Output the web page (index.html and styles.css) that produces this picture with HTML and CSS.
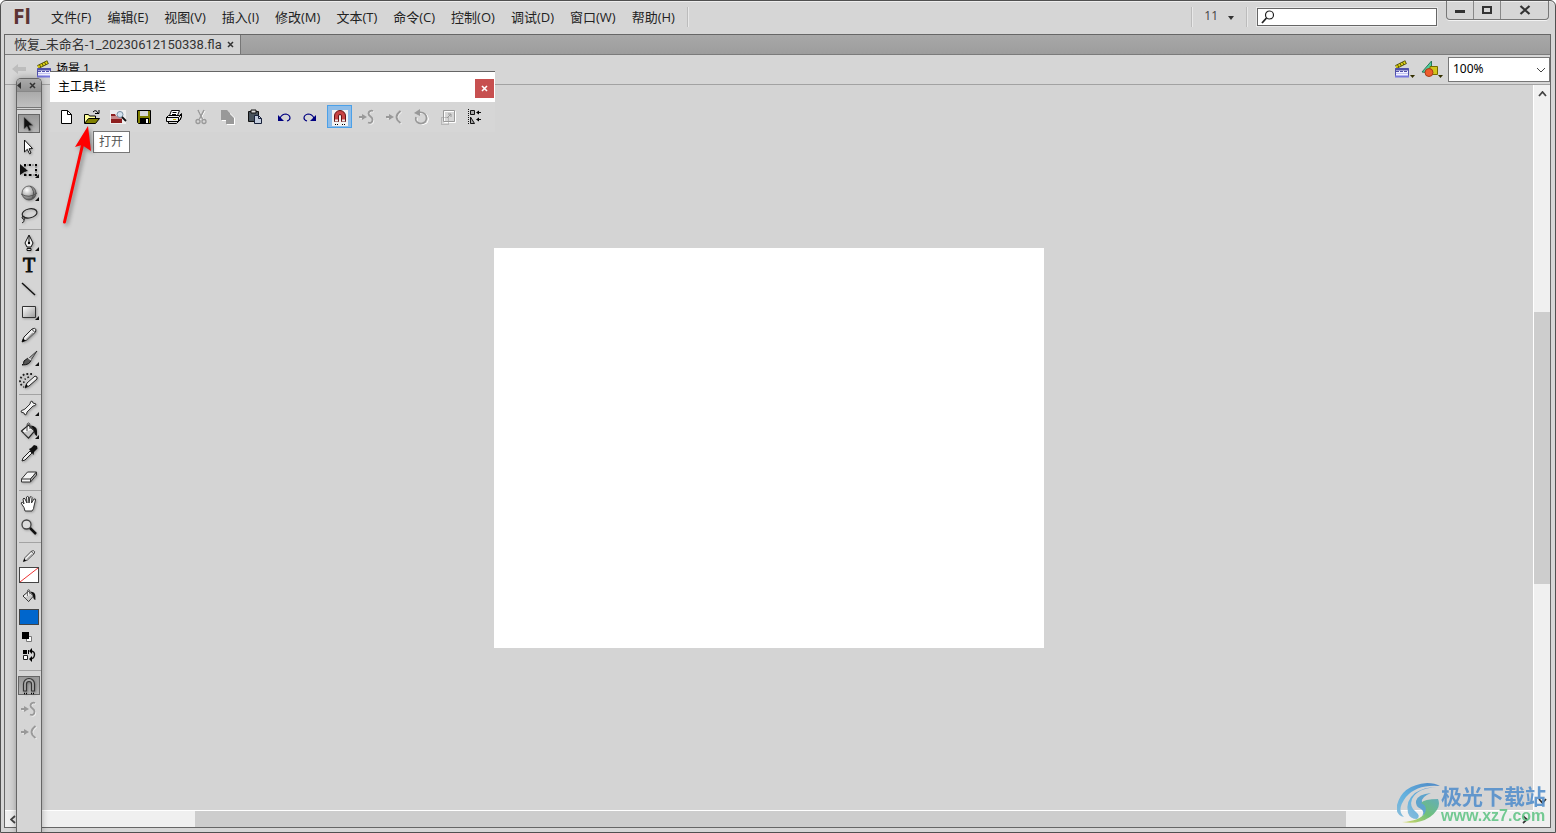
FILE: index.html
```html
<!DOCTYPE html>
<html lang="zh-CN">
<head>
<meta charset="utf-8">
<title>恢复_未命名-1_20230612150338.fla</title>
<link rel="stylesheet" href="styles.css">
</head>
<body>
<svg class="defs" aria-hidden="true">
  <defs>
    <linearGradient id="metal" x1="0" y1="0" x2="1" y2="1"><stop offset="0" stop-color="#fff"/><stop offset="1" stop-color="#999"/></linearGradient>
    <radialGradient id="ball" cx=".35" cy=".3" r=".8"><stop offset="0" stop-color="#fff"/><stop offset=".45" stop-color="#bbb"/><stop offset="1" stop-color="#444"/></radialGradient>
    <linearGradient id="swirlBlue" x1="1" y1="0" x2="0" y2="1"><stop offset="0" stop-color="#3f7fc4"/><stop offset=".6" stop-color="#58aee0"/><stop offset="1" stop-color="#7fb8d8"/></linearGradient>
    <linearGradient id="swirlGreen" x1="1" y1="0" x2="0" y2="1"><stop offset="0" stop-color="#58aab8"/><stop offset=".5" stop-color="#63bd6c"/><stop offset="1" stop-color="#d6d65c"/></linearGradient>
    <symbol id="clapper" viewBox="0 0 17 18">
      <path d="M2 7 12 2" stroke="#4d4900" stroke-width="4"/><path d="M2 7 12 2" stroke="#dbcf16" stroke-width="2.4" stroke-dasharray="2 .8"/>
      <path d="M1.500 8.500h13v8h-13z" fill="#f1f1ff" stroke="#5050a8"/><path d="M1 9.500h14" stroke="#5050a8" stroke-width="2"/><path d="M2 11.500h12" stroke="#5050a8" stroke-dasharray="3 1"/><path d="M2 13.500h12" stroke="#c4c4f4"/><path d="M1 16.500h14" stroke="#7676dd" stroke-width="2"/>
    </symbol>
    <symbol id="magnet" viewBox="0 0 18 18">
      <path d="M3.500 14V7a5.500 5.500 0 0 1 11 0v7h-3V7a2.500 2.500 0 0 0-5 0v7z" fill="#aaa" stroke="currentColor" stroke-width="1.200"/>
      <path d="M4 16.500h4M11 16.500h4" stroke="#000" stroke-width="1.400" stroke-dasharray="1 1"/>
    </symbol>
    <symbol id="smooth" viewBox="0 0 18 18">
      <path d="M2 10h5M15.500 4c-2-1-4 0-4 2.500 0 3 4 3 4 6s-2 4-4 3" fill="none" stroke="#eee" stroke-width="1.500"/>
      <path d="M1 9h5M15 3c-2-.8-4.500.2-4.500 2.500 0 3 4 3 4 6s-2 4-4.500 3" fill="none" stroke="#999" stroke-width="1.800"/><path d="m4 6 5 3-5 3z" fill="#999"/>
    </symbol>
    <symbol id="straighten" viewBox="0 0 18 18">
      <path d="M2 10h5m9.500-6q-4 3-4 6t4 6" fill="none" stroke="#eee" stroke-width="1.500"/>
      <path d="M1 9h5m9.500-6q-4 3-4 6t4 6" fill="none" stroke="#999" stroke-width="1.800"/><path d="m4 6 5 3-5 3z" fill="#999"/>
    </symbol>
    <symbol id="bucket" viewBox="0 0 20 20">
      <path d="m2.500 10 7-6 6 6-6 7z" fill="#f6f6f6" stroke="#222" stroke-width="1.200"/><path d="m4 12 5.500 4.500 5-6-2-2z" fill="#999" opacity=".5"/>
      <path d="M8 10V4.500Q8 2 9.500 2T11 4.500V8" fill="none" stroke="#444"/><path d="M11.500 4.500Q18 5 18 10v5q-3-1-3-6z" fill="#111"/>
    </symbol>
    <symbol id="pencil" viewBox="0 0 20 20">
      <path d="m3 17 2-5 8-8q3-1.500 4 .5l-.5 2.500-8.500 8z" fill="#eee" stroke="#222"/><path d="m12.500 4 3.500 3.500" stroke="#333"/><path d="m7 15 7-7" stroke="#999" stroke-width="1.500"/><path d="m3 17 1-3.500 2.500 2z" fill="#000"/>
    </symbol>
  </defs>
</svg>

<div class="app">
  <header class="titlebar">
    <span class="logo">Fl</span>
    <nav class="menu" aria-label="菜单">
      <button>文件(F)</button><button>编辑(E)</button><button>视图(V)</button><button>插入(I)</button><button>修改(M)</button><button>文本(T)</button><button>命令(C)</button><button>控制(O)</button><button>调试(D)</button><button>窗口(W)</button><button>帮助(H)</button>
    </nav>
    <span class="rule"></span>
    <span class="grow"></span>
    <span class="rule"></span>
    <button class="layout-switch">11 <svg width="6" height="4"><path d="M0 0h6L3 4z" fill="#333"/></svg></button>
    <span class="rule"></span>
    <label class="search">
      <svg width="14" height="14" viewBox="0 0 14 14" fill="none"><circle cx="8.500" cy="5" r="4" stroke="#222" stroke-width="1.200"/><path d="m5.500 8-4.500 5" stroke="#222" stroke-width="1.800"/></svg>
      <input type="text" aria-label="搜索">
    </label>
    <div class="window-buttons">
      <button aria-label="最小化"><svg width="12" height="12"><path d="M1 6h10v3H1z" fill="#333"/></svg></button>
      <button aria-label="最大化"><svg width="12" height="12"><path d="M2 3h8v6H2z" fill="none" stroke="#333" stroke-width="2"/></svg></button>
      <button class="quit" aria-label="关闭"><svg width="12" height="12"><path d="m1.500 2 9 8m0-8-9 8" stroke="#333" stroke-width="2.200"/></svg></button>
    </div>
  </header>

  <main class="document">
    <div class="tabs">
      <div class="tab"><span>恢复_未命名-1_20230612150338.fla</span><button aria-label="关闭文档"><svg width="7" height="7"><path d="m1 1 5 5m0-5-5 5" stroke="#333" stroke-width="1.500"/></svg></button></div>
    </div>
    <div class="editbar">
      <button class="back" aria-label="返回"><svg width="14" height="10"><path d="M0 5 6 0v3h8v4H6v3z" fill="#bdbdbd"/></svg></button>
      <svg class="scene-icon" width="17" height="18"><use href="#clapper"/></svg>
      <span class="scene">场景 1</span>
      <span class="grow"></span>
      <button class="edit-pick" aria-label="编辑场景"><svg width="17" height="18"><use href="#clapper"/></svg><svg class="nib" width="5" height="3"><path d="M0 0h5L2.500 3z" fill="#332f00"/></svg></button>
      <button class="edit-pick" aria-label="编辑元件"><svg width="18" height="18"><path d="M10.500 1v12L1 12z" fill="#50cfa0" stroke="#287858"/><path d="M9 6.500h7.500v8H9z" fill="#d3c51b" stroke="#746c00"/><circle cx="8" cy="12.500" r="4" fill="#ee5d2c" stroke="#a63c19"/></svg><svg class="nib" width="5" height="3"><path d="M0 0h5L2.500 3z" fill="#332f00"/></svg></button>
      <div class="zoom"><select aria-label="缩放"><option>100%</option></select><svg width="10" height="6"><path d="m1 1 4 4 4-4" fill="none" stroke="#444"/></svg></div>
    </div>
    <div class="workspace">
      <div class="pasteboard"><div class="stage"></div></div>
      <div class="scroll vertical">
        <svg width="9" height="6"><path d="m1 5 3.500-4L8 5" fill="none" stroke="#444" stroke-width="1.800"/></svg>
        <div class="track"><i class="before"></i><i class="thumb"></i><i class="after"></i></div>
        <svg width="9" height="6"><path d="m1 1 3.500 4L8 1" fill="none" stroke="#333" stroke-width="1.800"/></svg>
      </div>
      <div class="scroll horizontal">
        <svg width="6" height="9"><path d="M5 1 1 4.500 5 8" fill="none" stroke="#444" stroke-width="1.800"/></svg>
        <div class="track"><i class="before"></i><i class="thumb"></i><i class="after"></i></div>
        <svg width="6" height="9"><path d="m1 1 4 3.500L1 8" fill="none" stroke="#333" stroke-width="1.800"/></svg>
      </div>
      <div class="corner"></div>
    </div>
  </main>

  <aside class="toolbox" aria-label="工具">
    <div class="toolbox-head"><svg width="4" height="7"><path d="M4 0v7L0 3.500z" fill="#333"/></svg><button aria-label="关闭工具"><svg width="7" height="7"><path d="m1 1 5 5m0-5-5 5" stroke="#333" stroke-width="1.500"/></svg></button></div>
    <div class="toolbox-grip"></div>
    <div class="tools">
      <button class="tool on" aria-label="选择"><svg viewBox="0 0 20 20"><path d="m5 3 9 8.500-4 .3 2 4.200-2 1-2-4.500L5 15z" fill="#111" stroke="#777" stroke-width=".6"/></svg></button>
      <button class="tool" aria-label="部分选取"><svg viewBox="0 0 20 20"><path d="m5.500 3 8 8.500-3.500.3 2 4.200-1.500.8-2.200-4.500-2.800 2.700z" fill="#fff" stroke="#111"/></svg></button>
      <button class="tool more" aria-label="任意变形"><svg viewBox="0 0 20 20"><path d="M6 5h11v10H6z" fill="none" stroke="#111" stroke-dasharray="1 1.500"/><path d="M5 4h2v2H5zm5 0h2v2h-2zm6 0h2v2h-2zm0 5h2v2h-2zm0 5h2v2h-2zm-6 0h2v2h-2zm-5 0h2v2H5z"/><path d="m1 4 8 7-3 .5-5 3.500z" fill="#111"/></svg></button>
      <button class="tool more" aria-label="3D 旋转"><svg viewBox="0 0 20 20"><circle cx="10" cy="10" r="7" fill="url(#ball)" stroke="#444" stroke-width=".7"/><path d="M2 11q8 5 16-1M11 3q6 5 2 13" fill="none" stroke="#555"/></svg></button>
      <button class="tool" aria-label="套索"><svg viewBox="0 0 20 20"><ellipse cx="10.500" cy="7.500" rx="7.500" ry="4.500" transform="rotate(-12 10 7)" fill="none" stroke="#222" stroke-width="1.200"/><path d="M4 10q-2 2 0 3t2-1-3-1M5 13q1 3-2 4" fill="none" stroke="#222"/></svg></button>
      <hr>
      <button class="tool more" aria-label="钢笔"><svg viewBox="0 0 20 20"><path d="m10 2 4 8-2 4H8l-2-4z" fill="#f4f4f4" stroke="#111"/><path d="M10 3v7" stroke="#111"/><circle cx="10" cy="10" r="1.200"/><path d="M8 15.500h4v2H8z" fill="#ddd" stroke="#111"/></svg></button>
      <button class="tool letter" aria-label="文本">T</button>
      <button class="tool" aria-label="线条"><svg viewBox="0 0 20 20"><path d="m3 4 13 12" stroke="#111" stroke-width="1.400"/></svg></button>
      <button class="tool more" aria-label="矩形"><svg viewBox="0 0 20 20"><path d="M3.500 4.500h13v11h-13z" fill="url(#metal)" stroke="#333"/></svg></button>
      <button class="tool" aria-label="铅笔"><svg viewBox="0 0 20 20"><use href="#pencil"/></svg></button>
      <button class="tool more" aria-label="刷子"><svg viewBox="0 0 20 20"><path d="m18 3-8 7 2 2z" fill="#aaa" stroke="#222" stroke-width=".8"/><path d="m9 10 3 2q-1 5-9 5 2-1 2-4z" fill="#555" stroke="#111"/><path d="m9 9.500 3 2.500" stroke="#ddd" stroke-width="1.500"/></svg></button>
      <button class="tool" aria-label="喷涂刷"><svg viewBox="0 0 20 20"><path d="m6 17 2-5 8-7 2 1v2l-8 7z" fill="#eee" stroke="#222"/><path d="m6 17 1-4 2 2z"/><path d="M13 3H6Q1 6 1 10t4 6" fill="none" stroke="#222" stroke-width="1.800" stroke-dasharray="1.800 2"/><path d="M10 6Q4 8 5 12" fill="none" stroke="#222" stroke-width="1.500" stroke-dasharray="1.500 2"/></svg></button>
      <hr>
      <button class="tool more" aria-label="骨骼"><svg viewBox="0 0 20 20"><path d="m6 11 5-5q0-3 2-3l1 2 3 1q0 2-3 2l-6 6q0 3-2 3l-1-2-3-1q0-2 2-2z" fill="#f3f3f3" stroke="#333"/></svg></button>
      <button class="tool more" aria-label="颜料桶"><svg viewBox="0 0 20 20"><use href="#bucket"/></svg></button>
      <button class="tool" aria-label="滴管"><svg viewBox="0 0 20 20"><path d="m3 17 1-3 7-7 2 2-7 7z" fill="#eee" stroke="#222"/><path d="m10 5 2-1 3-3 3 1 .5 2.500L15 8l-.5 3z" fill="#111"/></svg></button>
      <button class="tool" aria-label="橡皮擦"><svg viewBox="0 0 20 20"><path d="m2.500 12 6-7h9l-6 7zM2.500 12v3h9v-3" fill="#f4f4f4" stroke="#333" stroke-linejoin="round"/><path d="M11.500 12v3l6-7V5z" fill="#aaa" stroke="#333" stroke-linejoin="round"/></svg></button>
      <hr>
      <button class="tool" aria-label="手形"><svg viewBox="0 0 20 20"><path d="M6 17q0-3-4-8 1-2 3 1L4 5q1-2 2 0l2 4-.5-6q1.500-1.500 2 0L10 9l1-6q1.500-1 2 .5L12.500 9 15 5q2-.5 1.500 1L15 12q0 3-2 5z" fill="#fff" stroke="#333"/></svg></button>
      <button class="tool" aria-label="缩放"><svg viewBox="0 0 20 20"><circle cx="7.500" cy="7.500" r="4.500" fill="#ddd" stroke="#444" stroke-width="1.300"/><path d="m11 11 6 6" stroke="#111" stroke-width="2.500"/></svg></button>
      <hr class="wide">
      <div class="paint">
        <svg viewBox="0 0 20 20"><use href="#pencil"/></svg>
        <button class="swatch none" aria-label="笔触颜色"><svg viewBox="0 0 18 14"><path d="M0 14 18 0" stroke="#e33"/></svg></button>
        <svg viewBox="0 0 20 20"><use href="#bucket"/></svg>
        <button class="swatch fill" aria-label="填充颜色"></button>
        <button class="mini" aria-label="黑白"><svg viewBox="0 0 20 16"><path d="M7.500 7.500h5v5h-5z" fill="#fff" stroke="#777"/><path d="M3 3h7v7H3z"/></svg></button>
        <button class="mini" aria-label="交换颜色"><svg viewBox="0 0 20 16"><path d="M4 3h4v4H4zm5 0h1v4H9z"/><path d="M4.500 8.500h4v4h-4z" fill="#fff" stroke="#222"/><path d="M11 4q5 0 4.500 4Q15 12 11 12" fill="none" stroke="#111" stroke-width="1.400"/><path d="m13 1-3 3 3 3zm0 8-3 3 3 3z"/></svg></button>
      </div>
      <hr class="wide">
      <button class="tool on" aria-label="贴紧至对象"><svg class="grey-magnet" viewBox="0 0 18 18"><use href="#magnet"/></svg></button>
      <button class="tool" aria-label="平滑" disabled><svg class="flat" viewBox="0 0 18 18"><use href="#smooth"/></svg></button>
      <button class="tool" aria-label="伸直" disabled><svg class="flat" viewBox="0 0 18 18"><use href="#straighten"/></svg></button>
    </div>
  </aside>

  <section class="toolbar-window" aria-label="主工具栏">
    <div class="toolbar-title"><span>主工具栏</span><button aria-label="关闭主工具栏"><svg width="7" height="7"><path d="m1 1 5 5m0-5-5 5" stroke="#fff" stroke-width="1.600"/></svg></button></div>
    <div class="toolbar">
      <div class="group">
        <button aria-label="新建"><svg viewBox="0 0 18 18"><path d="M4.500 2.500h6l4 4v9h-10z" fill="#fff" stroke="#000"/><path d="M10.500 2.500v4h4" fill="none" stroke="#000"/></svg></button>
        <button aria-label="打开"><svg viewBox="0 0 18 18"><path d="M1.500 15V6.500h4l1 1.500h6v2" fill="#ffff9c" stroke="#000"/><path d="m1.500 15.500 4-5h11l-4 5z" fill="#808000" stroke="#000"/><path d="M10 4q3-3 5 1m1-3v3.500h-4" fill="none" stroke="#000"/></svg></button>
        <button aria-label="在 Bridge 中浏览"><svg viewBox="0 0 18 18"><path d="M1 2h16v14H1z" fill="#eee"/><path d="M2 9V6h4l1 2h6v7H2z" fill="#8e2020"/><path d="M2 8h11v3H2z" fill="#c98a8a"/><circle cx="11" cy="6.500" r="3" fill="#d5e3ef" stroke="#788fa4"/><path d="m13 9 4 4" stroke="#111" stroke-width="1.800"/></svg></button>
        <button aria-label="保存"><svg viewBox="0 0 18 18"><path d="M2.500 2.500h13v13h-12l-1-1z" fill="#808000" stroke="#000"/><path d="M5 3h8v5H5z" fill="#d8d8d8"/><path d="M5 10h9v5H5z"/><path d="M11 11h2v4h-2z" fill="#fff"/></svg></button>
      </div>
      <div class="group roomy">
        <button aria-label="打印"><svg viewBox="0 0 18 18"><path d="m4.500 7.500 2-5h8l-2 5" fill="#fff" stroke="#000"/><path d="M7.500 4.500h4M7 6.500h4" stroke="#000"/><path d="m1.500 9.500 2-2h11l2-2v4l-3 4h-12z" fill="#eee" stroke="#000"/><path d="M1 9.500h12.500v4M13.500 9.500l3-3M3.500 13.500v2h8l4-4v-2" fill="none" stroke="#000"/><path d="M8 11.500h3" stroke="#c6b800"/></svg></button>
        <button aria-label="剪切" disabled><svg viewBox="0 0 18 18"><path d="m7 3 5 9m1-9-5 9" stroke="#fff"/><path d="m6 2 4.500 9M12 2 7.500 11" stroke="#999" stroke-width="1.500"/><circle cx="6" cy="13.500" r="2" fill="none" stroke="#999" stroke-width="1.300"/><circle cx="12" cy="13.500" r="2" fill="none" stroke="#999" stroke-width="1.300"/></svg></button>
        <button aria-label="复制" disabled><svg viewBox="0 0 18 18"><path d="M3 3h6l3 3 4 4v7H8v-4H3z" fill="#fff"/><path d="M2 2h6l3 3v1l4 4v6H7v-4H2z" fill="#999"/></svg></button>
        <button aria-label="粘贴"><svg viewBox="0 0 18 18"><path d="M2.500 3.500h10v10h-10z" fill="#48535c" stroke="#111"/><path d="M5 2h5v3H5z" fill="#ddd" stroke="#111"/><path d="M8.500 7.500h4l3 3v5h-7z" fill="#c3cddd" stroke="#17203a"/><path d="M12.500 7.500v3h3" fill="none" stroke="#17203a"/></svg></button>
      </div>
      <div class="group">
        <button aria-label="撤消"><svg viewBox="0 0 18 18"><path d="M5 10q2-4 6-4 4 1 4 4 0 2-3 3" fill="none" stroke="#000080" stroke-width="1.200"/><path d="M3 7v6h6z" fill="#000080"/></svg></button>
        <button aria-label="重做"><svg viewBox="0 0 18 18"><path d="M13 10q-2-4-6-4-4 1-4 4 0 2 3 3" fill="none" stroke="#000080" stroke-width="1.200"/><path d="M15 7v6H9z" fill="#000080"/></svg></button>
      </div>
      <div class="group roomy">
        <button class="active" aria-label="贴紧至对象"><svg viewBox="0 0 18 18"><path d="M1 2h16v16H1z" fill="#f3f3f3"/><path d="M3.500 13.500V8a5.500 5.500 0 0 1 11 0v5.500h-4V8a1.500 1.500 0 0 0-3 0v5.500z" fill="#c84444" stroke="#681414"/><path d="M4 12.500h3m4 0h3" stroke="#eee" stroke-width="2"/><path d="M4 16.500h4m3 0h4" stroke="#000" stroke-dasharray="1 1"/></svg></button>
        <button aria-label="平滑" disabled><svg viewBox="0 0 18 18"><use href="#smooth"/></svg></button>
        <button aria-label="伸直" disabled><svg viewBox="0 0 18 18"><use href="#straighten"/></svg></button>
        <button aria-label="旋转与倾斜" disabled><svg viewBox="0 0 18 18"><path d="M6 6q6-2 9 1 3 4 0 8-4 3-8 0-3-2-2-5" fill="none" stroke="#fff"/><path d="M4 5q6-2 9 1 3 4 0 8-4 3-8 0-2-2-1-5" fill="none" stroke="#999" stroke-width="1.600"/><path d="m8 1-6 4 6 3z" fill="#999"/></svg></button>
        <button aria-label="缩放" disabled><svg viewBox="0 0 18 18"><path d="M5.500 3.500h11v11h-11z" fill="none" stroke="#fff"/><path d="M4.500 2.500h11v11h-11z" fill="none" stroke="#999"/><path d="M2.500 9.500h7v7h-7z" fill="none" stroke="#999" stroke-dasharray="1 1"/><path d="m8 10 4-4m-3 0h3v3" fill="none" stroke="#999"/></svg></button>
        <button aria-label="对齐"><svg viewBox="0 0 18 18"><path d="M2.500 1v16" stroke="#111" stroke-dasharray="1 1"/><path d="M4.500 2.500h4v4h-4zm0 6.500 4 6.500h-4z" fill="#aaa" stroke="#111"/><path d="M11 4.500h4m-4 7h4" stroke="#111"/><path d="m10 4.500 3-2v4zm0 7 3-2v4z"/></svg></button>
      </div>
    </div>
  </section>

  <div class="tooltip" role="tooltip">打开</div>
  <svg class="pointer" viewBox="0 0 44 106" aria-hidden="true"><path d="m9.500 97 18-77" stroke="#f00" stroke-width="3" stroke-linecap="round"/><path d="M33 1 36 26 27 20 20 22z" fill="#f00"/></svg>

  <div class="watermark">
    <svg viewBox="0 0 44 42" aria-hidden="true">
      <path d="M43 3Q20 1 9 14-1 27 7 34q-9-2-7-12Q5 2 30 0 38 0 43 3z" fill="url(#swirlBlue)"/>
      <path d="M40 4Q20 5 15 16q-3 8 4 13 5 4 1 7-7 0-9-6Q8 18 18 10 27 4 40 4z" fill="url(#swirlBlue)"/>
      <path d="M34 10Q21 11 19 18q-1 5 5 8 4 3 1 7 7-4 5-9-1-4-5-5-1-5 9-9z" fill="#539fcd"/>
      <path d="M5 39q18-1 23-9 3-7-4-10 3-4 17-4 4 9-8 18Q21 42 5 39z" fill="url(#swirlGreen)"/>
    </svg>
    <div><b>极光下载站</b><span>www.xz7.com</span></div>
  </div>
</div>
</body>
</html>
```

FILE: styles.css
```css
* { box-sizing: border-box; }
body { margin: 0; background: #fff; font: 13px/18px "Open Sans", "Noto Sans", "Noto Sans CJK SC", sans-serif; color: #222; }
button { margin: 0; padding: 0; border: 0; background: none; font: inherit; color: inherit; }
svg { display: block; flex: none; }
.defs { position: absolute; width: 0; height: 0; }
.grow { flex: 1; }

.app { position: relative; display: flex; flex-direction: column; height: 100vh; padding: 0 4px 4px 3px; overflow: hidden; background: #d6d6d6; border: 1px solid #505050; border-radius: 6px 6px 0 0; box-shadow: inset 0 1px #eee; }

/* Title bar */
.titlebar { display: flex; align-items: center; height: 33px; padding: 0 0 2px 9px; flex: none; }
.logo { width: 38px; padding-bottom: 2px; font: 700 21px/28px "Open Sans", sans-serif; color: #5c3434; }
.menu { display: flex; gap: 16px; margin-right: 12px; }
.rule { width: 2px; height: 20px; background: #bcbcbc; border-right: 1px solid #e8e8e8; }
.layout-switch { display: flex; align-items: center; gap: 10px; padding: 0 12px 2px 11px; font-size: 12px; color: #444; }
.layout-switch svg { margin-top: 5px; }
.search { display: flex; align-items: center; width: 180px; height: 18px; margin: 0 9px; padding-left: 3px; background: #fff; border: 1px solid #666; box-shadow: 0 0 0 1px #e8e8e8; }
.search input { width: 100%; min-width: 0; height: 16px; padding: 0 4px; border: 0; outline: 0; background: none; }
.window-buttons { display: flex; align-self: flex-start; height: 19px; margin-right: 2px; border: 1px solid #777; border-top: 0; border-radius: 0 0 4px 4px; box-shadow: 0 1px #f2f2f2; }
.window-buttons button { display: grid; place-items: center; width: 27px; border-right: 1px solid #888; }
.window-buttons .quit { width: 47px; border: 0; }

/* Document window */
.document { flex: 1; min-height: 0; display: flex; flex-direction: column; border: 1px solid #666; }
.tabs { display: flex; flex: none; height: 20px; background: linear-gradient(#a8a8a8, #9d9d9d); border-bottom: 1px solid #7b7b7b; }
.tab { display: flex; align-items: center; gap: 5px; padding: 0 6px 0 9px; background: #d3d3d3; border-right: 1px solid #777; font-family: Roboto, "Noto Sans CJK SC", sans-serif; color: #333; line-height: 19px; }
.editbar { display: flex; align-items: center; flex: none; height: 30px; padding: 0 0 1px 7px; border-bottom: 1px solid #a2a2a2; }
.scene-icon { margin: 0 3px 0 10px; }
.scene { font-size: 12px; color: #000; }
.edit-pick { display: flex; align-items: flex-end; width: 27px; }
.edit-pick .nib { margin-left: -1px; }
.zoom { position: relative; width: 102px; height: 25px; }
.zoom select { appearance: none; width: 100%; height: 25px; padding: 0 4px; background: #fff; border: 1px solid #777; border-radius: 0; font: 12px/20px "Noto Sans", sans-serif; color: #000; }
.zoom svg { position: absolute; right: 4px; top: 10px; pointer-events: none; }

.workspace { flex: 1; min-height: 0; display: grid; grid-template: minmax(0, 1fr) 17px / minmax(0, 1fr) 17px; }
.pasteboard { display: grid; place-items: center; background: #d4d4d4; }
.stage { width: 550px; height: 400px; background: #fff; }
.scroll { display: flex; align-items: center; background: #f0f0f0; }
.track { flex: 1; display: flex; }
.track i { display: block; }
.thumb { background: #cdcdcd; }
.vertical { flex-direction: column; gap: 6px; border-left: 1px solid #fff; padding: 6px 0; }
.vertical .track { flex-direction: column; width: 100%; }
.vertical .before { flex: 209; }
.vertical .thumb { flex: 273; }
.vertical .after { flex: 208; }
.horizontal { gap: 6px; border-top: 1px solid #fff; padding: 0 5px; }
.horizontal .track { align-self: stretch; }
.horizontal .before { flex: 173; }
.horizontal .thumb { flex: 1149; }
.horizontal .after { flex: 170; }
.corner { background: #f0f0f0; }

/* Floating tools panel */
.toolbox { position: absolute; left: 15px; top: 77px; bottom: -1px; width: 26px; border: 1px solid #666; border-bottom: 0; border-radius: 5px 5px 0 0; background: #d5d5d5; box-shadow: 0 0 7px rgba(0, 0, 0, .3); overflow: hidden; display: flex; flex-direction: column; }
.toolbox-head { display: flex; align-items: center; justify-content: space-between; height: 13px; padding-right: 5px; background: linear-gradient(#aaa, #929292); border-bottom: 1px solid #888; flex: none; }
.toolbox-grip { height: 16px; background: linear-gradient(#aaa, #c0c0c0); border-bottom: 1px solid #777; flex: none; }
.tools { flex: 1; margin-top: 1px; border-top: 1px solid #777; padding-top: 2px; display: flex; flex-direction: column; }
.tools hr { width: 22px; height: 1px; margin: 2px 0 1px 2px; border: 0; background: #a3a3a3; flex: none; }
.tools .wide { margin: 4px 0 3px 2px; }
.tool { position: relative; display: grid; place-items: center; height: 23px; width: 24px; flex: none; }
.tool svg { width: 20px; height: 20px; filter: drop-shadow(1px 1px 1px rgba(0, 0, 0, .25)); }
.tool.on::before { content: ""; position: absolute; inset: 2px 1px; border: 1px solid #666; background: linear-gradient(#999, #b5b5b5); }
.tool.on svg { position: relative; }
.tool.more::after { content: ""; position: absolute; right: 2px; bottom: 3px; border: 2px solid #111; border-color: transparent #111 #111 transparent; }
.letter { font: 20px/23px "Liberation Serif", serif; color: #000; -webkit-text-stroke: 1px #111; }
.tool .grey-magnet { width: 18px; height: 18px; color: #333; }
.tool .flat { width: 18px; height: 18px; filter: none; }
.paint { display: grid; justify-items: center; align-items: center; grid-template-rows: 20px 18px 24px 18px 22px 14px; margin-bottom: 4px; }
.paint > svg { width: 16px; height: 16px; }
.swatch { width: 20px; height: 16px; background: #fff; border: 1px solid #444; }
.fill { background: #06c; }
.mini { width: 20px; height: 16px; }

/* Floating main toolbar */
.toolbar-window { position: absolute; left: 49px; top: 70px; width: 445px; background: #d6d6d6; border-top: 1px solid #666; }
.toolbar-title { display: flex; align-items: center; justify-content: space-between; height: 30px; padding: 0 1px 0 8px; background: #fff; color: #000; font-size: 12px; }
.toolbar-title button { display: grid; place-items: center; width: 19px; height: 19px; margin-top: 3px; background: #c75050; }
.toolbar { display: flex; gap: 3px; height: 30px; padding: 3px; align-items: flex-start; }
.group { display: flex; }
.group button { display: grid; place-items: center; width: 26px; height: 23px; }
.group.roomy button { width: 27px; }
.group svg { width: 18px; height: 18px; }
.group.roomy .active { width: 25px; margin: 0 1px; background: #8fbde8; border: 1px solid #4ba0e8; }

.tooltip { position: absolute; left: 92px; top: 130px; padding: 1px 6px 1px 5px; background: #fff; border: 1px solid #777; font-size: 12px; color: #555; }
.pointer { position: absolute; left: 54px; top: 124px; width: 44px; height: 106px; filter: drop-shadow(2px 2px 2px rgba(0, 0, 0, .4)); }

.watermark { position: absolute; right: 9px; bottom: 7px; display: flex; align-items: center; gap: 0; opacity: .9; }
.watermark > svg { width: 44px; height: 42px; }
.watermark div { display: flex; flex-direction: column; }
.watermark b { font: 700 21px/23px "Noto Sans CJK SC", sans-serif; color: #5590cc; }
.watermark span { font: 700 16px/18px "Liberation Sans", sans-serif; color: #65c588; }
```
